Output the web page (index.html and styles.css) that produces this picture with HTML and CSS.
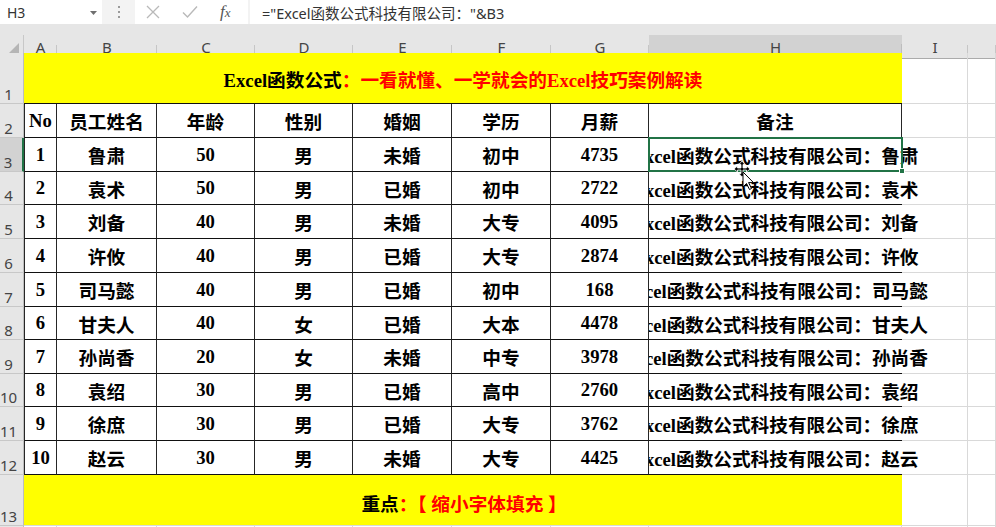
FILE: index.html
```html
<!DOCTYPE html>
<html lang="zh-CN">
<head>
<meta charset="utf-8">
<title>Excel</title>
<link rel="stylesheet" href="styles.css">
</head>
<body>
<div class="app">
  <div class="fbar">
    <div class="namebox"><span class="nb-text">H3</span><svg class="dd" width="7" height="4" viewBox="0 0 7 4"><path d="M0 0H7L3.5 4Z" fill="#6f6f6f"/></svg></div>
    <div class="grip"><i></i><i></i><i></i></div>
    <div class="btns">
      <svg class="ic" width="14" height="14" viewBox="0 0 14 14"><path d="M1 1L13 13M13 1L1 13" stroke="#b9b9b9" stroke-width="1.3" fill="none"/></svg>
      <svg class="ic" width="16" height="14" viewBox="0 0 16 14"><path d="M1 7.5L5.5 12L15 1.5" stroke="#b9b9b9" stroke-width="1.4" fill="none"/></svg>
      <span class="fx">f<span class="fx-x">x</span></span>
    </div>
    <div class="formula">="Excel函数公式科技有限公司："&amp;B3</div>
  </div>
  <div class="chrome-gap"></div>
  <div class="sheet">
    <div class="row hdr">
      <div class="corner"><svg width="14" height="14" viewBox="0 0 14 14"><path d="M13 1V13H1Z" fill="#b5b5b5"/></svg></div>
      <div class="ch">A</div><div class="ch">B</div><div class="ch">C</div><div class="ch">D</div><div class="ch">E</div><div class="ch">F</div><div class="ch">G</div><div class="ch ch-sel">H</div><div class="ch">I</div><div class="ch"></div>
    </div>

    <div class="row r51">
      <div class="rh">1</div>
      <div class="banner title"><span>Excel函数公式</span><span class="red">：一看就懂、一学就会的Excel技巧案例解读</span></div>
      <div class="gc"></div><div class="gc"></div>
    </div>

    <div class="row r34 trow">
      <div class="rh">2</div>
      <div class="tc ta">No</div><div class="tc">员工姓名</div><div class="tc">年龄</div><div class="tc">性别</div><div class="tc">婚姻</div><div class="tc">学历</div><div class="tc tg">月薪</div><div class="tc">备注</div>
      <div class="gc"></div><div class="gc"></div>
    </div>

    <div class="row r34 trow">
      <div class="rh rh-sel">3</div>
      <div class="tc ta">1</div><div class="tc">鲁肃</div><div class="tc">50</div><div class="tc">男</div><div class="tc">未婚</div><div class="tc">初中</div><div class="tc tg">4735</div>
      <div class="tc th active"><span class="ov">Excel函数公式科技有限公司：鲁肃</span><div class="sel"><i class="handle"></i></div>
        <svg class="cursor" width="30" height="32" viewBox="0 0 30 32">
          <path d="M12 2L15 5.5H13V9H16.5V7L20 10L16.5 13V11H13V14.5H15L12 18L9 14.5H11V11H7.5V13L4 10L7.5 7V9H11V5.5H9Z" fill="#000" stroke="#fff" stroke-width="0.8"/>
          <path d="M13 13V28L16.5 24.5L19.5 30.5L21.5 29.5L18.6 23.6H23.5Z" fill="#fff" stroke="#000" stroke-width="1"/>
        </svg>
      </div>
      <div class="gc"></div><div class="gc"></div>
    </div>

    <div class="row r33 trow">
      <div class="rh">4</div>
      <div class="tc ta">2</div><div class="tc">袁术</div><div class="tc">50</div><div class="tc">男</div><div class="tc">已婚</div><div class="tc">初中</div><div class="tc tg">2722</div>
      <div class="tc th"><span class="ov">Excel函数公式科技有限公司：袁术</span></div>
      <div class="gc"></div><div class="gc"></div>
    </div>

    <div class="row r34 trow">
      <div class="rh">5</div>
      <div class="tc ta">3</div><div class="tc">刘备</div><div class="tc">40</div><div class="tc">男</div><div class="tc">未婚</div><div class="tc">大专</div><div class="tc tg">4095</div>
      <div class="tc th"><span class="ov">Excel函数公式科技有限公司：刘备</span></div>
      <div class="gc"></div><div class="gc"></div>
    </div>

    <div class="row r34 trow">
      <div class="rh">6</div>
      <div class="tc ta">4</div><div class="tc">许攸</div><div class="tc">40</div><div class="tc">男</div><div class="tc">已婚</div><div class="tc">大专</div><div class="tc tg">2874</div>
      <div class="tc th"><span class="ov">Excel函数公式科技有限公司：许攸</span></div>
      <div class="gc"></div><div class="gc"></div>
    </div>

    <div class="row r34 trow">
      <div class="rh">7</div>
      <div class="tc ta">5</div><div class="tc">司马懿</div><div class="tc">40</div><div class="tc">男</div><div class="tc">已婚</div><div class="tc">初中</div><div class="tc tg">168</div>
      <div class="tc th"><span class="ov">Excel函数公式科技有限公司：司马懿</span></div>
      <div class="gc"></div><div class="gc"></div>
    </div>

    <div class="row r33 trow">
      <div class="rh">8</div>
      <div class="tc ta">6</div><div class="tc">甘夫人</div><div class="tc">40</div><div class="tc">女</div><div class="tc">已婚</div><div class="tc">大本</div><div class="tc tg">4478</div>
      <div class="tc th"><span class="ov">Excel函数公式科技有限公司：甘夫人</span></div>
      <div class="gc"></div><div class="gc"></div>
    </div>

    <div class="row r34 trow">
      <div class="rh">9</div>
      <div class="tc ta">7</div><div class="tc">孙尚香</div><div class="tc">20</div><div class="tc">女</div><div class="tc">未婚</div><div class="tc">中专</div><div class="tc tg">3978</div>
      <div class="tc th"><span class="ov">Excel函数公式科技有限公司：孙尚香</span></div>
      <div class="gc"></div><div class="gc"></div>
    </div>

    <div class="row r33 trow">
      <div class="rh">10</div>
      <div class="tc ta">8</div><div class="tc">袁绍</div><div class="tc">30</div><div class="tc">男</div><div class="tc">已婚</div><div class="tc">高中</div><div class="tc tg">2760</div>
      <div class="tc th"><span class="ov">Excel函数公式科技有限公司：袁绍</span></div>
      <div class="gc"></div><div class="gc"></div>
    </div>

    <div class="row r34 trow">
      <div class="rh">11</div>
      <div class="tc ta">9</div><div class="tc">徐庶</div><div class="tc">30</div><div class="tc">男</div><div class="tc">已婚</div><div class="tc">大专</div><div class="tc tg">3762</div>
      <div class="tc th"><span class="ov">Excel函数公式科技有限公司：徐庶</span></div>
      <div class="gc"></div><div class="gc"></div>
    </div>

    <div class="row r34 trow">
      <div class="rh">12</div>
      <div class="tc ta">10</div><div class="tc">赵云</div><div class="tc">30</div><div class="tc">男</div><div class="tc">未婚</div><div class="tc">大专</div><div class="tc tg">4425</div>
      <div class="tc th"><span class="ov">Excel函数公式科技有限公司：赵云</span></div>
      <div class="gc"></div><div class="gc"></div>
    </div>

    <div class="row r51">
      <div class="rh">13</div>
      <div class="banner note"><span>重点</span><span class="red">：【 缩小字体填充 】</span></div>
      <div class="gc"></div><div class="gc"></div>
    </div>

    <div class="row r34">
      <div class="rh"></div>
      <div class="gc"></div><div class="gc"></div><div class="gc"></div><div class="gc"></div><div class="gc"></div><div class="gc"></div><div class="gc"></div><div class="gc"></div><div class="gc"></div><div class="gc"></div>
    </div>
  </div>
</div>
</body>
</html>
```

FILE: styles.css
```css
* { box-sizing: border-box; }
html, body { margin: 0; padding: 0; }
body {
  width: 996px;
  height: 527px;
  overflow: hidden;
  background: #fff;
  font-family: "Noto Sans", "Noto Sans CJK SC", sans-serif;
}
.app { width: 996px; height: 527px; overflow: hidden; background: #e6e6e6; }

/* formula bar */
.fbar {
  display: flex;
  height: 24px;
  background: #f3f3f3;
}
.namebox {
  width: 102px;
  background: #fff;
  display: flex;
  align-items: center;
  justify-content: space-between;
  padding: 0 5px 0 7px;
  font-size: 14px;
  color: #333;
}
.dd { margin-top: 1px; }
.grip {
  width: 33px;
  display: flex;
  flex-direction: column;
  align-items: center;
  justify-content: center;
  gap: 3px;
}
.grip i { display: block; width: 2px; height: 2px; background: #9a9a9a; }
.btns {
  width: 113px;
  background: #fff;
  display: flex;
  align-items: center;
  padding-left: 11px;
  gap: 0;
}
.btns .ic:first-child { margin-right: 22px; }
.btns .ic:nth-child(2) { margin-right: 22px; }
.fx {
  font-family: "Liberation Serif", serif;
  font-style: italic;
  font-size: 17px;
  color: #555;
  line-height: 1;
  margin-top: -2px;
}
.fx-x { font-size: 13px; }
.formula {
  flex: 1;
  margin-left: 2px;
  background: #fff;
  display: flex;
  align-items: center;
  padding-left: 12px;
  font-family: "Noto Sans", "Noto Sans CJK SC", sans-serif;
  font-size: 14.5px;
  color: #333;
  white-space: nowrap;
}
.chrome-gap { height: 11px; }

/* sheet */
.sheet { background: #fff; }
.row {
  display: grid;
  grid-template-columns: 24px 33px 100px 98px 98px 99px 99px 98px 253px 66px 1fr;
}
.hdr { height: 18px; background: #e6e6e6; }
.r51 { height: 51px; }
.r34 { height: 34px; }
.r33 { height: 33px; }

.corner {
  display: flex;
  align-items: flex-end;
  justify-content: flex-end;
  padding: 0 3px 2px 0;
  border-right: 1px solid #c8c8c8;
  border-bottom: 1px solid #ababab;
  background: #e6e6e6;
}
.ch {
  display: flex;
  align-items: center;
  justify-content: center;
  font-size: 15px;
  color: #444;
  background: linear-gradient(#c6c6c6, #c6c6c6) right bottom / 1px 13px no-repeat, #e6e6e6;
  border-bottom: 1px solid #ababab;
  padding-top: 1px;
}
.ch-sel {
  background: linear-gradient(#bdbdbd, #bdbdbd) right bottom / 1px 13px no-repeat, #d2d2d2;
  border-bottom: 2px solid #217346;
  padding-top: 2px;
}

.rh {
  display: flex;
  align-items: flex-end;
  justify-content: center;
  padding: 0 6px 1px 0;
  font-size: 15px;
  line-height: 1;
  color: #444;
  background: #e6e6e6;
  border-right: 1px solid #bdbdbd;
  border-bottom: 1px solid #c8c8c8;
}
.rh-sel {
  background: #d2d2d2;
  border-right: 2px solid #217346;
}

.gc {
  border-right: 1px solid #d9d9d9;
  border-bottom: 1px solid #d9d9d9;
}

.banner {
  grid-column: 2 / 10;
  background: #ffff00;
  display: flex;
  align-items: center;
  justify-content: center;
  font: 700 18.67px "Liberation Serif", "Noto Sans CJK SC", serif;
  color: #000;
  white-space: pre;
  border-bottom: 1px solid #d9d9d9;
}
.banner.title { border-bottom: 1px solid #111; padding-top: 1px; }
.banner.note { padding-top: 4px; padding-left: 2px; }
.red { color: #ff0000; }

.tc {
  display: flex;
  align-items: center;
  justify-content: center;
  font: 700 18.67px "Liberation Serif", "Noto Sans CJK SC", serif;
  color: #000;
  white-space: nowrap;
  border-right: 1px solid #262626;
  border-bottom: 1px solid #111;
  background: #fff;
}
.tc.ta { border-left: 1px solid #262626; }
.tc.tg { position: relative; z-index: 1; }
.tc.th {
  border-right: none;
  background: transparent;
  position: relative;
}
.trow:first-of-type .tc.th { border-right: 1px solid #262626; }
.ov { flex-shrink: 0; }

.sel {
  position: absolute;
  left: -1px;
  top: -1px;
  right: -1px;
  bottom: -1px;
  border: 2px solid #217346;
  z-index: 2;
}
.handle {
  position: absolute;
  right: -4px;
  bottom: -4px;
  width: 6px;
  height: 6px;
  background: #217346;
  border: 1px solid #fff;
}
.cursor {
  position: absolute;
  left: 81px;
  top: 21px;
  z-index: 3;
}
```
